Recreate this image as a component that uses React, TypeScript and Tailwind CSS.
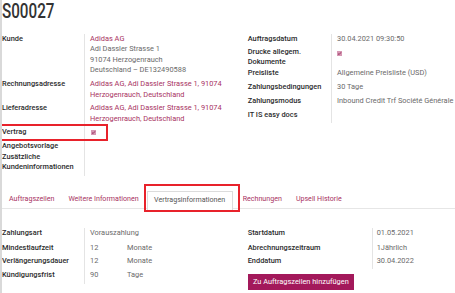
import React from "react";

const LINK = "text-[#a83262]";
const VAL = "text-[#6a6a6a]";
const LBL = "text-[#2b2b2b] font-medium";

function Check() {
  return (
    <span className="inline-flex items-center justify-center w-[5px] h-[5px] bg-[#d698b4] align-middle">
      <svg viewBox="0 0 6 6" className="w-[5px] h-[5px]">
        <path d="M1.2 3.1 L2.5 4.3 L4.8 1.6" stroke="#8a1d4c" strokeWidth="1" fill="none" />
      </svg>
    </span>
  );
}

type Row = { label: React.ReactNode; value: React.ReactNode; cls?: string };

function Group({ rows, labelW, valuePad = "pl-[5px]" }: { rows: Row[]; labelW: string; valuePad?: string }) {
  return (
    <div className={`grid ${labelW}`}>
      {rows.map((r, i) => (
        <React.Fragment key={i}>
          <div className={`${LBL} ${r.cls ?? "pb-[3px]"}`}>{r.label}</div>
          <div className={`border-l border-[#e4e4e4] ${valuePad} ${VAL} ${r.cls ?? "pb-[3px]"}`}>{r.value}</div>
        </React.Fragment>
      ))}
    </div>
  );
}

export default function App() {
  const tabs = ["Auftragszeilen", "Weitere Informationen", "Vertragsinformationen", "Rechnungen", "Upsell Historie"];
  return (
    <div
      className="relative w-[455px] h-[293px] overflow-hidden bg-white border-l-2 border-[#d9d9d9] text-[7.4px] leading-[10.6px]"
      style={{ fontFamily: "Roboto, 'Noto Sans', sans-serif" }}
    >
      <div className="h-[33.7px] pt-[1px]">
        <div className="text-[19.5px] leading-[22px] font-medium text-[#333] origin-left scale-x-[0.78] w-[80px]">S00027</div>
      </div>

      <div className="flex">
        <div className="w-[245.7px]">
          <Group
            labelW="grid-cols-[82px_1fr]"
            rows={[
              {
                label: "Kunde",
                value: (
                  <>
                    <div className={LINK}>Adidas AG</div>
                    <div>Adi Dassler Strasse 1</div>
                    <div>91074 Herzogenrauch</div>
                    <div>Deutschland – DE132490588</div>
                  </>
                ),
              },
              {
                label: "Rechnungsadresse",
                value: <div className={LINK}>Adidas AG, Adi Dassler Strasse 1, 91074 Herzogenrauch, Deutschland</div>,
              },
              {
                label: "Lieferadresse",
                value: <div className={LINK}>Adidas AG, Adi Dassler Strasse 1, 91074 Herzogenrauch, Deutschland</div>,
              },
              { label: "Vertrag", value: <div className="pl-[1px]"><Check /></div> },
              { label: "Angebotsvorlage", value: "", cls: "pb-0" },
              { label: <>Zusätzliche<br />Kundeninformationen</>, value: "" },
            ]}
          />
        </div>
        <div className="flex-1">
          <Group
            labelW="grid-cols-[83.3px_1fr]"
            rows={[
              { label: "Auftragsdatum", value: "30.04.2021 09:30:50", cls: "pb-[3.1px]" },
              { label: <>Drucke allegem.<br />Dokumente</>, value: <div className="pt-[1px]"><Check /></div>, cls: "pb-[0.3px] leading-[10px]" },
              { label: "Preisliste", value: "Allgemeine Preisliste (USD)", cls: "pb-[4.1px]" },
              { label: "Zahlungsbedingungen", value: "30 Tage", cls: "pb-[2.7px]" },
              { label: "Zahlungsmodus", value: "Inbound Credit Trf Société Générale", cls: "pb-[3.4px]" },
              { label: "IT IS easy docs", value: "" },
            ]}
          />
        </div>
      </div>

      {/* Tabs */}
      <div className="mt-[14.7px] flex h-[18.3px] border-b border-[#e6e6e6] text-[7.1px]">
        {tabs.map((t, i) =>
          i === 2 ? (
            <div
              key={t}
              className="ml-[1px] mr-[3px] px-[6.5px] flex items-center h-[19.3px] border border-b-0 border-[#dcdcdc] bg-white text-[#555]"
            >
              {t}
            </div>
          ) : (
            <div key={t} className={`px-[7px] flex items-center h-[18.3px] ${LINK}`}>
              {t}
            </div>
          )
        )}
      </div>

      {/* Contract info */}
      <div className="mt-[19.7px] flex">
        <div className="w-[245.7px]">
          <Group
            labelW="grid-cols-[82px_1fr]"
            rows={[
              { label: "Zahlungsart", value: "Vorauszahlung", cls: "pb-[4.4px]" },
              {
                label: "Mindestlaufzeit",
                value: (
                  <div className="flex">
                    <span className="w-[37px]">12</span>
                    <span>Monate</span>
                  </div>
                ),
                cls: "pb-[2.1px]",
              },
              {
                label: "Verlängerungsdauer",
                value: (
                  <div className="flex">
                    <span className="w-[37px]">12</span>
                    <span>Monate</span>
                  </div>
                ),
                cls: "pb-[3.4px]",
              },
              {
                label: "Kündigungsfrist",
                value: (
                  <div className="flex">
                    <span className="w-[37px]">90</span>
                    <span>Tage</span>
                  </div>
                ),
              },
            ]}
          />
        </div>
        <div className="flex-1">
          <Group
            labelW="grid-cols-[124px_1fr]"
            valuePad="pl-[4px]"
            rows={[
              { label: "Startdatum", value: "01.05.2021", cls: "pb-[4.1px]" },
              { label: "Abrechnungszeitraum", value: "1Jährlich", cls: "pb-[2.1px]" },
              { label: "Enddatum", value: "30.04.2022", cls: "pb-[3px]" },
            ]}
          />
          <div className="mt-[4.6px] w-[106.3px] h-[16.4px] bg-[#a3195b] text-white flex items-center justify-center">
            Zu Auftragszeilen hinzufügen
          </div>
        </div>
      </div>

      {/* Red annotation boxes */}
      <div className="absolute left-[-2px] top-[124px] w-[108px] h-[17px] border-2 border-[#e8222b] pointer-events-none" />
      <div className="absolute left-[142px] top-[184px] w-[95.7px] h-[28px] border-2 border-[#e8222b] pointer-events-none" />
    </div>
  );
}
